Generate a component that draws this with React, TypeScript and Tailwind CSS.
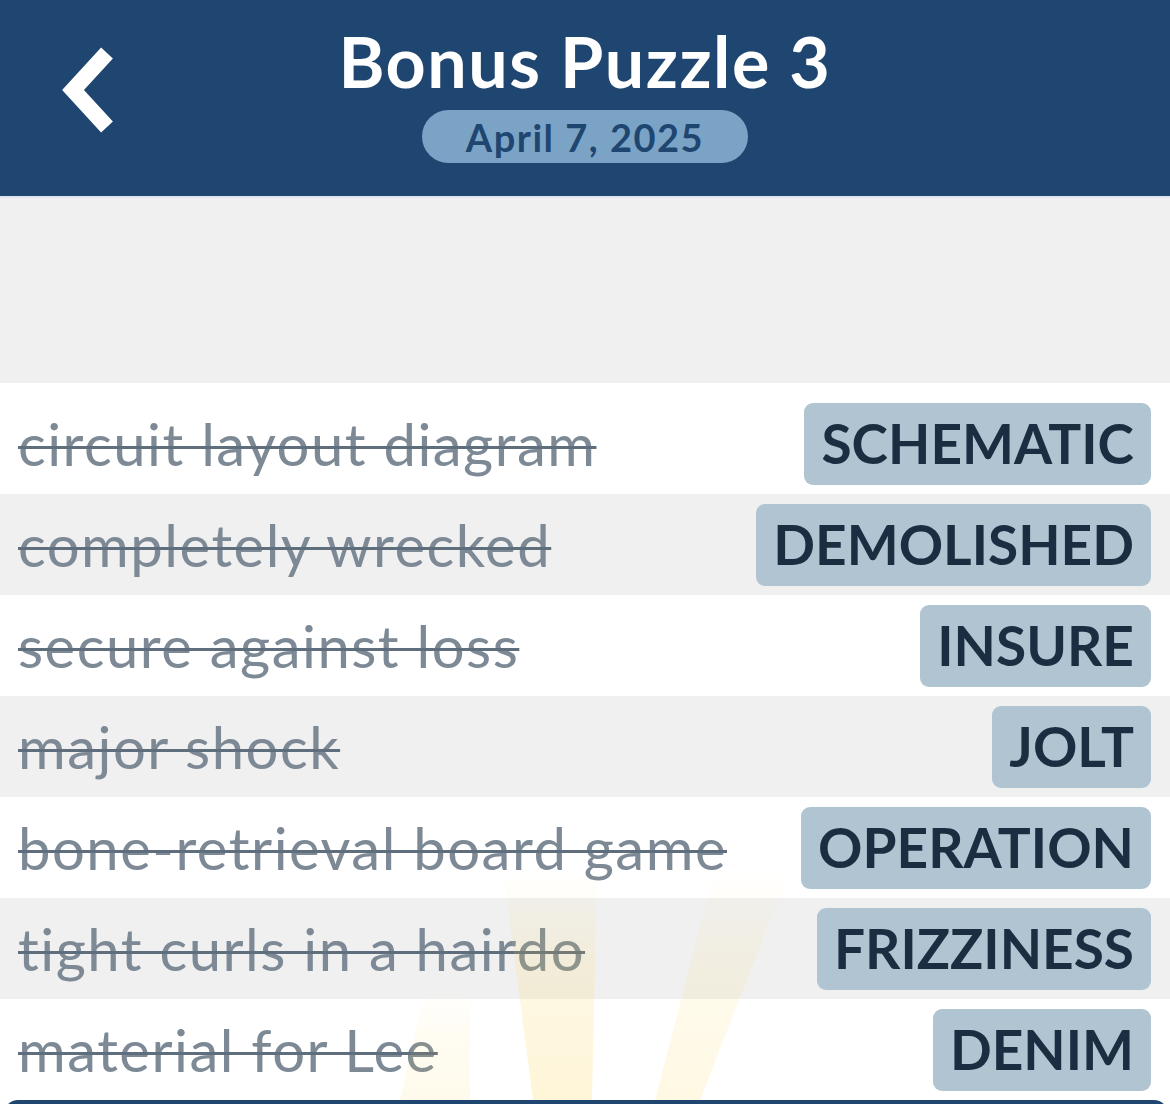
import React from 'react'

const clues = [
  { clue: 'circuit layout diagram', answer: 'SCHEMATIC' },
  { clue: 'completely wrecked', answer: 'DEMOLISHED' },
  { clue: 'secure against loss', answer: 'INSURE' },
  { clue: 'major shock', answer: 'JOLT' },
  { clue: 'bone-retrieval board game', answer: 'OPERATION' },
  { clue: 'tight curls in a hairdo', answer: 'FRIZZINESS' },
  { clue: 'material for Lee', answer: 'DENIM' },
]

function BackChevron() {
  return (
    <svg width="80" height="120" viewBox="0 0 80 120" className="block">
      <path d="M63 23 L29 60 L63 97" fill="none" stroke="white" strokeWidth="16" strokeLinecap="butt" strokeLinejoin="miter" />
    </svg>
  )
}

// faint light beams near the bottom of the list
function Rays() {
  return (
    <svg className="pointer-events-none" width="1170" height="260" viewBox="0 0 1170 260">
      <defs>
        <linearGradient id="ray" x1="0" y1="0" x2="0" y2="1">
          <stop offset="0" stopColor="#fcd34d" stopOpacity="0" />
          <stop offset="0.4" stopColor="#fcd34d" stopOpacity="0.14" />
          <stop offset="1" stopColor="#fcd34d" stopOpacity="0.22" />
        </linearGradient>
      </defs>
      <polygon points="503,20 597,20 592,250 533,250" fill="url(#ray)" />
      <polygon points="715,20 790,20 700,250 655,250" fill="url(#ray)" opacity="0.7" />
      <polygon points="425,140 470,140 470,250 400,250" fill="url(#ray)" opacity="0.5" />
    </svg>
  )
}

export default function App() {
  return (
    <div className="w-[1170px] h-[1104px] overflow-hidden bg-[#f0f0f0] flex flex-col" style={{ fontFamily: 'Lato, "Noto Sans", sans-serif' }}>
      {/* Header */}
      <header className="relative h-[196px] shrink-0 bg-[#1f4670] flex flex-col items-center">
        <div className="absolute left-[44px] top-[30px]">
          <BackChevron />
        </div>
        <h1 className="mt-[21px] text-[70px] leading-[80px] font-bold text-white tracking-[1.5px]">Bonus Puzzle 3</h1>
        <div className="mt-[9px] h-[53px] w-[326px] rounded-full bg-[#7ba3c6] flex items-center justify-center">
          <span className="text-[38px] font-bold text-[#1f4670] leading-none tracking-[1.5px]">April 7, 2025</span>
        </div>
      </header>

      <div className="h-[187px] shrink-0 border-t-2 border-[#dde6f0]" />

      {/* Clue list */}
      <div className="relative flex-1 bg-white pt-[10px]">
        {clues.map((c, i) => (
          <div
            key={c.answer}
            className={`flex h-[101px] items-center justify-between pl-[18px] pr-[19px] ${i % 2 === 1 ? 'bg-[#f0f0f0]' : 'bg-white'}`}
          >
            <span className="text-[58px] leading-none tracking-[1.5px] text-[#7d8a96] line-through decoration-[#5f6e7c] decoration-[3px]">
              {c.clue}
            </span>
            <span className="flex h-[82px] items-center rounded-[9px] bg-[#b0c4d2] px-[17px] text-[55px] font-bold leading-none text-[#1b2d40]">
              {c.answer}
            </span>
          </div>
        ))}
        <div className="pointer-events-none absolute left-0 top-[467px]">
          <Rays />
        </div>
        <div className="absolute left-[4px] right-[2px] top-[717px] h-[20px] rounded-t-[14px] bg-[#1f4670]" />
      </div>
    </div>
  )
}
